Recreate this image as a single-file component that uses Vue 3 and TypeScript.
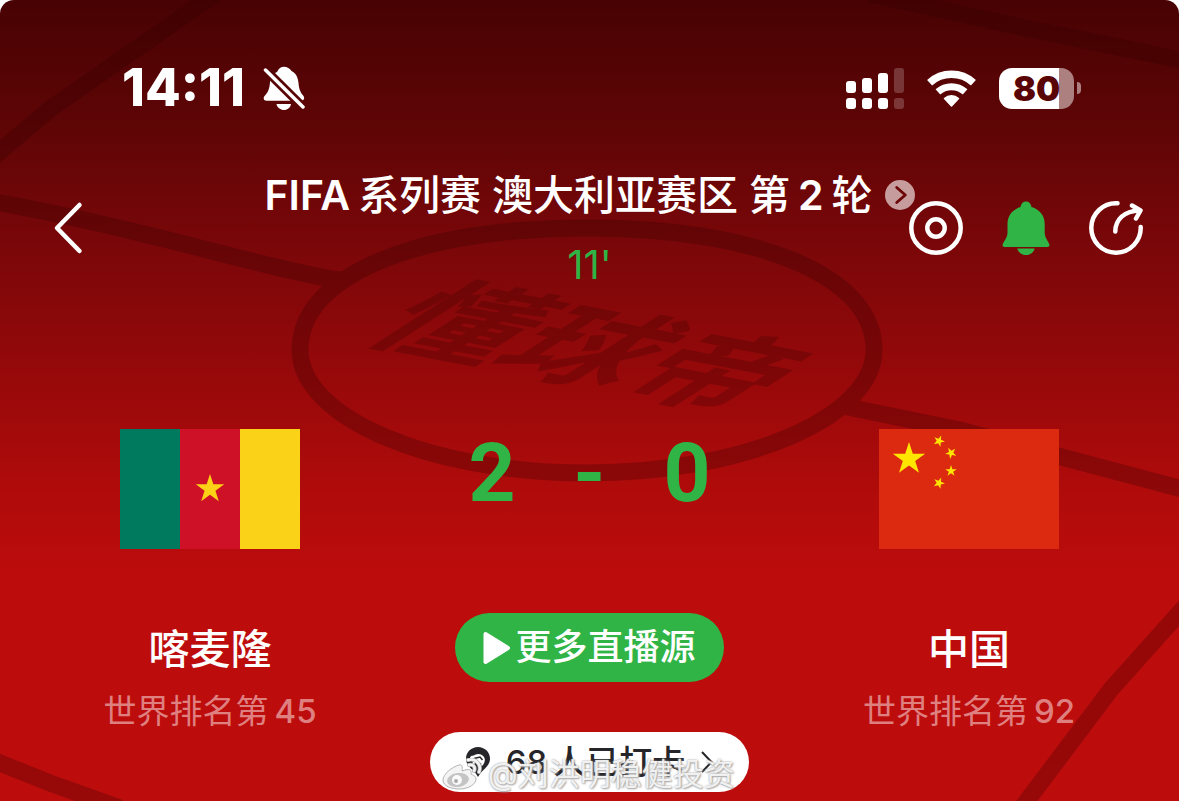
<script setup lang="ts">
interface Star {
  x: number
  y: number
  r: number
  angle: number
}

interface Bar {
  x: number
  top: number
  dim: boolean
}

const bars: Bar[] = [
  { x: 0, top: 13, dim: false },
  { x: 16, top: 10, dim: false },
  { x: 32, top: 5, dim: false },
  { x: 48, top: 0, dim: true },
]

const cameroonStars: Star[] = [{ x: 90, y: 60, r: 15, angle: 0 }]

const chinaStars: Star[] = [
  { x: 30, y: 30, r: 17, angle: 0 },
  { x: 60, y: 12, r: 6, angle: 22 },
  { x: 72, y: 24, r: 6, angle: 45 },
  { x: 72, y: 42, r: 6, angle: 0 },
  { x: 60, y: 54, r: 6, angle: 22 },
]

function starPoints(s: Star): string {
  const points: string[] = []
  for (let i = 0; i < 10; i++) {
    const radius = i % 2 === 0 ? s.r : s.r * 0.382
    const a = ((s.angle - 90 + i * 36) * Math.PI) / 180
    points.push(`${(s.x + radius * Math.cos(a)).toFixed(2)},${(s.y + radius * Math.sin(a)).toFixed(2)}`)
  }
  return points.join(' ')
}
</script>

<template>
  <main class="page">
    <svg class="pitch" viewBox="0 0 1179 801" preserveAspectRatio="xMidYMin slice" aria-hidden="true">
      <g class="lines">
        <path d="M300 350C300 272 425 228 587 228S874 272 874 350C874 417 745 473 587 473S300 417 300 350Z" />
        <path d="M-10 201 Q80 217 200 248 T342 280" />
        <path d="M838 405 L960 430 L1190 491" />
        <path d="M-10 160 L50 109 L123 58 L215 -6" />
        <path d="M870 -6 L1012 25 L1190 62" />
        <path d="M-10 759 L50 783 L120 808" />
        <path d="M1190 601 L1112 688 L1020 810" />
      </g>
      <text class="brand" transform="matrix(1.27 0.245 -1.15 0.74 348 345)" x="0" y="-9">懂球帝</text>
    </svg>

    <header class="status">
      <div class="clock">
        <span class="time">14:11</span>
        <svg width="42" height="44" viewBox="0 0 42 44" role="img" aria-label="静音">
          <mask id="slash-gap">
            <rect width="42" height="44" fill="#fff" />
            <path d="M-2 -.5 L46 47" stroke="#000" stroke-width="9" />
          </mask>
          <g fill="#fff" mask="url(#slash-gap)">
            <path d="M14 6C15.500 2.500 18 .7 21 .7S27 2.500 28.500 5C33.500 7.500 35 12 35.500 17C36 24 38 27 40.500 30C42 32.500 41 34.700 38 34.700H3.500C.5 34.700 0 32 1.500 30C5 26.500 6.500 23 7 16C7.400 11 9.500 8 14 6Z" />
            <path d="M13.500 38H28C27.500 41.500 24.500 44 21 44S14 41.500 13.500 38Z" />
          </g>
          <path d="M2.500 4 L40 41" stroke="#fff" stroke-width="3.500" stroke-linecap="round" />
        </svg>
      </div>
      <div class="indicators">
        <svg width="58" height="41" viewBox="0 0 58 41" fill="#fff" role="img" aria-label="信号">
          <g v-for="b in bars" :key="b.x" :opacity="b.dim ? 0.2 : 1">
            <rect :x="b.x" :y="b.top" width="10" :height="25 - b.top" rx="3" />
            <rect :x="b.x" y="30" width="10" height="11" rx="3" />
          </g>
        </svg>
        <svg width="51" height="38" viewBox="0 0 51 38" fill="none" stroke="#fff" role="img" aria-label="无线网络">
          <path d="M3.600 13.700A32.700 32.700 0 0 1 47.400 13.700" stroke-width="7.500" />
          <path d="M11.900 22.900A20.300 20.300 0 0 1 39.100 22.900" stroke-width="7" />
          <path d="M25.500 37L18.500 29.500A10.500 10.500 0 0 1 32.500 29.500Z" fill="#fff" stroke-width="1.500" stroke-linejoin="round" />
        </svg>
        <div class="battery">
          <span class="charge">80</span>
          <i class="nub"></i>
        </div>
      </div>
    </header>

    <nav class="nav">
      <button class="icon-button back" type="button" aria-label="返回">
        <svg width="30" height="54" viewBox="0 0 30 54">
          <path d="M26.500 4L4 27L26.500 50" fill="none" stroke="#fff" stroke-width="4.500" stroke-linecap="round" stroke-linejoin="round" />
        </svg>
      </button>

      <div class="heading">
        <a class="title" href="#">
          <h1><span class="latin">FIFA</span><span>系列赛 澳大利亚赛区 第</span><span class="latin">2</span><span>轮</span></h1>
          <svg width="30" height="30" viewBox="0 0 30 30" aria-hidden="true">
            <circle cx="15" cy="15" r="15" fill="#c79c9c" />
            <path d="M11.700 7.500L20.300 15L11.700 22.500" fill="none" stroke="#6b0608" stroke-width="2.800" stroke-linecap="round" stroke-linejoin="round" />
          </svg>
        </a>
        <p class="minute">11'</p>
      </div>

      <div class="actions">
        <button class="icon-button" type="button" aria-label="视角">
          <svg width="54" height="54" viewBox="0 0 54 54" fill="none" stroke="#fff" stroke-width="4.500">
            <circle cx="27" cy="27" r="24.700" />
            <circle cx="27" cy="27" r="8.700" />
          </svg>
        </button>
        <button class="icon-button" type="button" aria-label="提醒">
          <svg width="54" height="54" viewBox="0 0 54 54" fill="#2fb445">
            <path d="M27 .5C30 .5 32 2.500 32.500 6C40.500 8.500 45.700 14.500 45.700 23V32C45.700 36 48 38.500 50 42.500C51 44.700 50.300 46 48.500 46H5.500C3.700 46 3 44.700 4 42.500C6 38.500 8.500 36 8.500 32V23C8.500 14.500 13.500 8.500 21.500 6C22 2.500 24 .5 27 .5Z" />
            <path d="M18.300 47.500H35.700C34.500 51.500 31.500 54 27 54S19.500 51.500 18.300 47.500Z" />
          </svg>
        </button>
        <button class="icon-button" type="button" aria-label="分享">
          <svg width="54" height="54" viewBox="0 0 54 54" fill="none" stroke="#fff" stroke-width="4.500" stroke-linecap="round" stroke-linejoin="round">
            <path d="M28.500 2.300A24.700 24.700 0 1 0 51.700 26" />
            <path d="M26.300 30.500C26.500 18.500 35 10 50.500 9.500" />
            <path d="M43 4.500L51.500 9.500L47 17.500" />
          </svg>
        </button>
      </div>
    </nav>

    <section class="match">
      <article class="team">
        <svg width="180" height="120" viewBox="0 0 180 120" role="img" aria-label="喀麦隆国旗">
          <rect width="60" height="120" fill="#007a5e" />
          <rect x="60" width="60" height="120" fill="#ce1126" />
          <rect x="120" width="60" height="120" fill="#fad217" />
          <polygon v-for="s in cameroonStars" :key="s.x" :points="starPoints(s)" fill="#fcd116" />
        </svg>
        <h2 class="name">喀麦隆</h2>
        <p class="rank"><span>世界排名第</span><span class="latin">45</span></p>
      </article>

      <div class="center">
        <div class="score"><span>2</span><span>-</span><span>0</span></div>
        <button class="live" type="button">
          <svg width="28" height="34" viewBox="0 0 28 34" aria-hidden="true">
            <path d="M2.500 3L25 17L2.500 31Z" fill="#fff" stroke="#fff" stroke-width="4" stroke-linejoin="round" />
          </svg>
          <span>更多直播源</span>
        </button>
        <div class="checkin-wrap">
          <button class="checkin" type="button">
            <svg width="24" height="30" viewBox="0 0 24 30" aria-hidden="true">
              <path d="M12 0C5.500 0 0 5 0 11.500C0 17 3.500 20 6 22.500C8.500 25 10.500 27 12 30C13.500 27 15.500 25 18 22.500C20.500 20 24 17 24 11.500C24 5 18.500 0 12 0Z" fill="#26262a" />
              <path d="M4 10.500C5 8 8 9 9.500 7.500C13 6 17 7.500 18.500 11C19.500 14 18 17.500 15.500 19.500L15 15.500L12.500 18.500L12 14.500L9 16L7.500 18.500L5.500 17L8 13.500L5 13Z" fill="#fff" />
              <path d="M8 11.500L14 10L16.500 13" fill="none" stroke="#26262a" stroke-width="1.500" />
            </svg>
            <span class="checkin-text"><span class="latin">68</span><span>人已打卡</span></span>
            <svg width="12" height="24" viewBox="0 0 12 24" aria-hidden="true">
              <path d="M1 2L10.500 12L1 22" fill="none" stroke="#26262a" stroke-width="2" />
            </svg>
          </button>
          <div class="watermark">
            <svg width="40" height="32" viewBox="0 0 40 32" aria-hidden="true">
              <path d="M17 7C10 9 1 16 1 22C1 28 9 31 17 31C27 31 34 26 34 21C34 18 31 17 29 16C30 12 28 10 20 13C21 9 20 6 17 7Z" fill="#f4f4f4" stroke="#b4b4b4" />
              <ellipse cx="16" cy="22" rx="11" ry="7" fill="#c4c4c4" transform="rotate(-8 16 22)" />
              <circle cx="15" cy="22" r="5" fill="#fafafa" />
              <circle cx="14" cy="23" r="2" fill="#aaa" />
              <path d="M26 2C34 0 40 7 37 14M27 7C31 6 34 9 32 13" fill="none" stroke="#b4b4b4" stroke-width="4" stroke-linecap="round" />
              <path d="M26 2C34 0 40 7 37 14M27 7C31 6 34 9 32 13" fill="none" stroke="#f4f4f4" stroke-width="2.500" stroke-linecap="round" />
            </svg>
            <span>@刘洪明稳健投资</span>
          </div>
        </div>
      </div>

      <article class="team">
        <svg width="180" height="120" viewBox="0 0 180 120" role="img" aria-label="中国国旗">
          <rect width="180" height="120" fill="#dc2a10" />
          <polygon v-for="s in chinaStars" :key="`${s.x}-${s.y}`" :points="starPoints(s)" fill="#ffe600" />
        </svg>
        <h2 class="name">中国</h2>
        <p class="rank"><span>世界排名第</span><span class="latin">92</span></p>
      </article>
    </section>
  </main>
</template>

<style>
body {
  margin: 0;
  background: #fff;
}
</style>

<style scoped>
.page {
  position: relative;
  box-sizing: border-box;
  min-height: 100vh;
  padding: 60px 0 9px;
  overflow: hidden;
  border-radius: 14px 14px 0 0;
  background: linear-gradient(#480203 0, #5f0506 130px, #7a0709 245px, #9a090a 390px, #b00b0b 490px, #bd0c0c 580px);
  color: #fff;
  font-family: Inter, "Noto Sans CJK SC", sans-serif;
}

h1,
h2,
p {
  margin: 0;
}

svg {
  display: block;
  flex: none;
}

button {
  border: 0;
  padding: 0;
  color: inherit;
  font: inherit;
  cursor: pointer;
}

.pitch {
  position: absolute;
  inset: 0;
  width: 100%;
  height: 100%;
}

.lines {
  fill: none;
  stroke: #300000;
  stroke-width: 17px;
  opacity: 0.27;
}

.brand {
  fill: #300000;
  fill-opacity: 0.24;
  font-family: "Noto Sans CJK SC", sans-serif;
  font-size: 100px;
  font-weight: 700;
}

.status {
  position: relative;
  display: flex;
  align-items: center;
  justify-content: space-between;
  height: 56px;
  padding: 0 98px 0 122px;
}

.clock {
  display: flex;
  align-items: center;
  gap: 18px;
}

.time {
  font-size: 52px;
  font-weight: 800;
  line-height: 56px;
}

.indicators {
  display: flex;
  align-items: center;
  gap: 22px;
}

.battery {
  display: flex;
  align-items: center;
  gap: 3px;
}

.charge {
  width: 75px;
  border-radius: 13px;
  background: linear-gradient(90deg, #fff 60px, #ad8080 60px);
  color: #5a0505;
  font-size: 34px;
  font-weight: 900;
  line-height: 41px;
  text-align: center;
}

.nub {
  width: 4px;
  height: 12px;
  border-radius: 0 4px 4px 0;
  background: #ad8080;
}

.nav {
  position: relative;
  display: grid;
  align-items: center;
  margin-top: 54px;
  padding: 0 36px 0 53px;
}

.nav > * {
  grid-area: 1 / 1;
}

.icon-button {
  background: none;
}

.back {
  justify-self: start;
}

.heading {
  display: flex;
  flex-direction: column;
  align-items: center;
  gap: 24px;
  justify-self: center;
  margin-right: 17px;
}

.title {
  display: flex;
  align-items: center;
  gap: 12px;
  color: inherit;
  text-decoration: none;
}

.title h1 {
  display: flex;
  gap: 8px;
  font-size: 41px;
  font-weight: 500;
  line-height: 50px;
  white-space: pre;
}

.title .latin {
  font-weight: 600;
}

.minute {
  color: #2fb445;
  font-size: 40px;
  line-height: 42px;
}

.actions {
  display: flex;
  gap: 36px;
  justify-self: end;
}

.match {
  position: relative;
  display: grid;
  grid-template-columns: 1fr 339px 1fr;
  margin-top: 143px;
}

.team,
.center {
  display: flex;
  flex-direction: column;
  align-items: center;
}

.name {
  margin-top: 70px;
  font-size: 41px;
  font-weight: 500;
  line-height: 60px;
}

.rank {
  display: flex;
  gap: 6px;
  margin-top: 10px;
  color: #df8080;
  font-size: 33px;
  line-height: 44px;
}

.rank .latin {
  font-weight: 500;
}

.score {
  display: flex;
  justify-content: space-between;
  width: 242px;
  color: #2fb445;
  font-family: Roboto, sans-serif;
  font-size: 82px;
  font-weight: 700;
  line-height: 88px;
}

.live {
  display: flex;
  align-items: center;
  justify-content: center;
  gap: 4px;
  margin-top: 96px;
  padding: 0 28px;
  border-radius: 35px;
  background: #2fb445;
  font-size: 36px;
  font-weight: 500;
  line-height: 69px;
}

.checkin-wrap {
  position: relative;
  margin-top: 50px;
}

.checkin {
  display: flex;
  align-items: center;
  gap: 16px;
  padding: 0 36px;
  border-radius: 30px;
  background: #fff;
  color: #26262a;
  font-size: 33px;
  line-height: 60px;
}

.checkin-text {
  display: flex;
  gap: 6px;
  font-weight: 500;
}

.watermark {
  position: absolute;
  top: 22px;
  left: 12px;
  display: flex;
  align-items: center;
  gap: 6px;
  color: rgba(255, 255, 255, 0.85);
  font-size: 31px;
  line-height: 40px;
  text-shadow: 0 0 2px #999, 1px 1px 2px #aaa;
  white-space: nowrap;
  pointer-events: none;
}
</style>
